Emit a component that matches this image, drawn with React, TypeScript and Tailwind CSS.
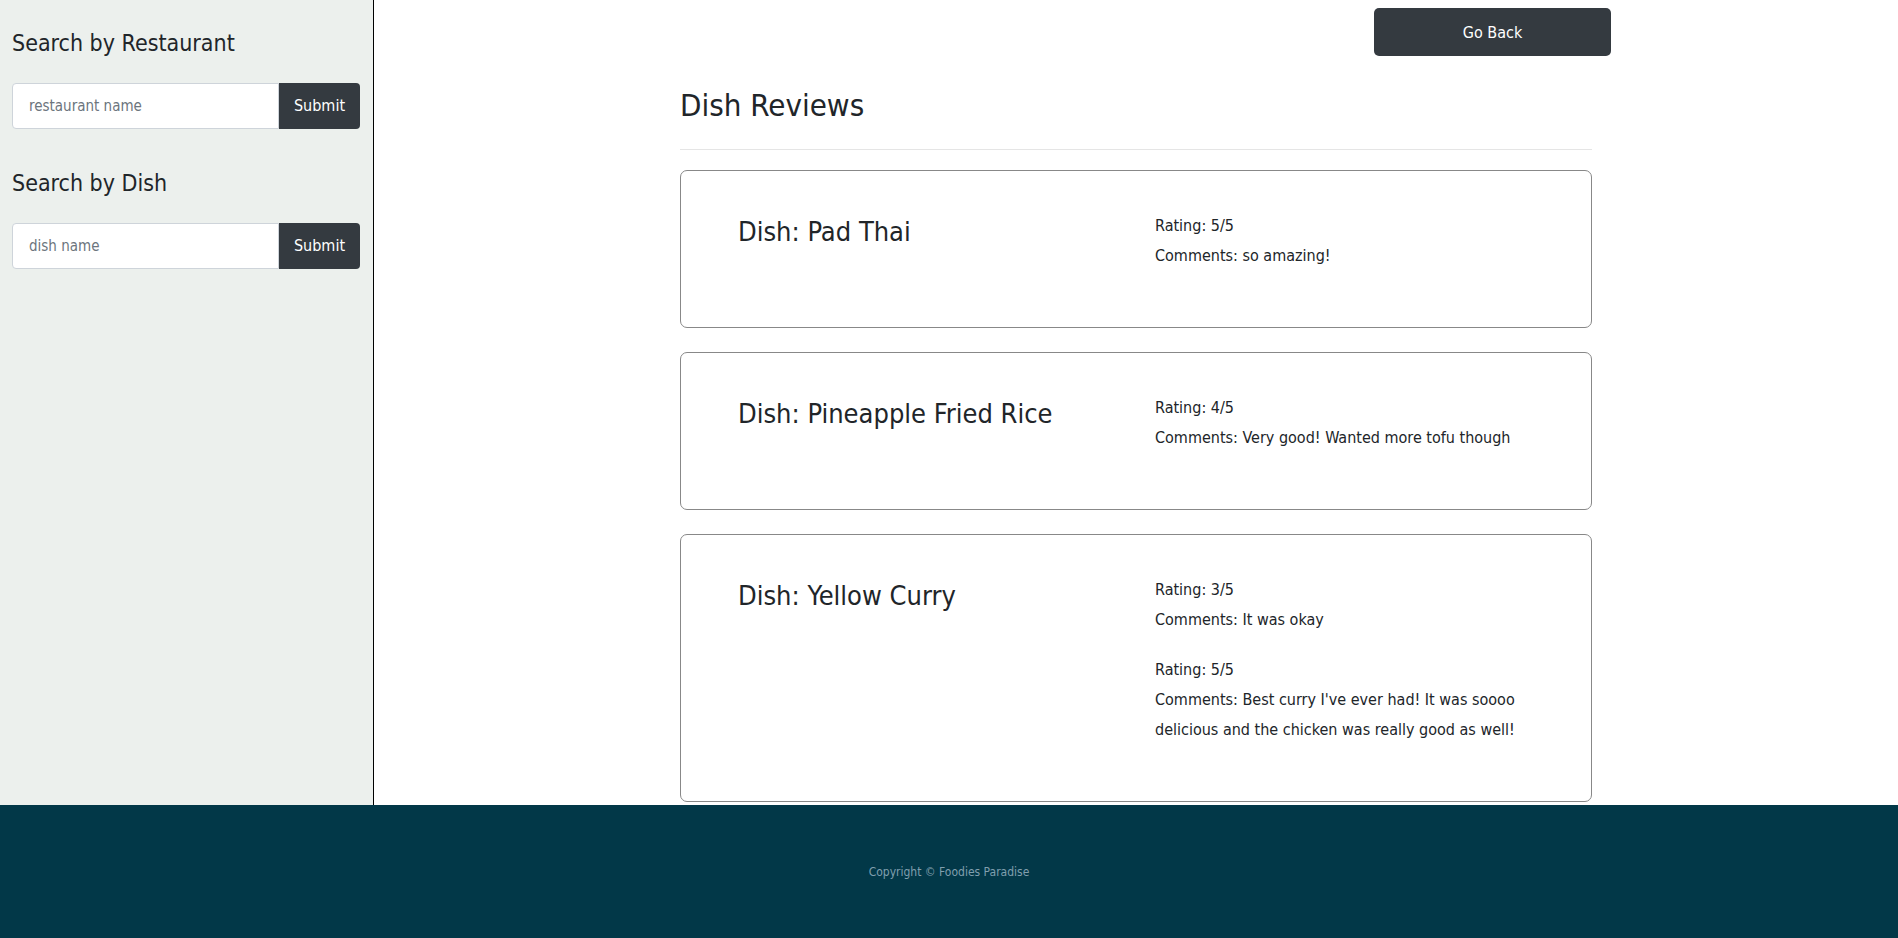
import React from "react";

const font = { fontFamily: '"Liberation Sans Narrow", "DejaVu Sans Condensed", "Liberation Sans", sans-serif' };

const reviewsData = [
  {
    id: 1,
    dish: "Pad Thai",
    reviews: [{ rating: 5, comments: "so amazing!" }],
  },
  {
    id: 2,
    dish: "Pineapple Fried Rice",
    reviews: [{ rating: 4, comments: "Very good! Wanted more tofu though" }],
  },
  {
    id: 3,
    dish: "Yellow Curry",
    reviews: [
      { rating: 3, comments: "It was okay" },
      {
        rating: 5,
        comments: "Best curry I've ever had! It was soooo delicious and the chicken was really good as well!",
      },
    ],
  },
];

const SearchBox = ({ title, placeholder }: { title: string; placeholder: string }) => {
  return (
    <div>
      <h3 className="text-[23px] leading-[34px] text-[#212529] mb-[23px]">{title}</h3>
      <div className="flex w-[348px]">
        <input
          className="w-[267px] h-[46px] border border-[#ced4da] rounded-l-[4px] bg-white pl-[16px] text-[15px] text-[#495057] placeholder:text-[#6c757d] outline-none"
          placeholder={placeholder}
          style={font}
        />
        <button
          className="w-[81px] h-[46px] bg-[#343a40] text-white text-[16px] rounded-r-[4px]"
          style={font}
        >
          Submit
        </button>
      </div>
    </div>
  );
};

const DishCard = ({ dish, reviews }: { dish: string; reviews: { rating: number; comments: string }[] }) => {
  return (
    <div className="border border-[#888888] rounded-[7px] pt-[38px] pb-[36px] pl-[57px] flex">
      <div className="w-[417px] shrink-0">
        <h2 className="text-[27px] leading-[37px] mt-[4px] text-[#212529]">Dish: {dish}</h2>
      </div>
      <div className="w-[385px] pt-[2px]">
        {reviews.map((r, i) => (
          <div key={i} className="mb-[20px] text-[16px] leading-[30px] text-[#212529]">
            <p>Rating: {r.rating}/5</p>
            <p>Comments: {r.comments}</p>
          </div>
        ))}
      </div>
    </div>
  );
};

const App = () => {
  return (
    <div className="min-h-screen flex flex-col bg-white" style={font}>
      <div className="flex flex-1">
        <aside className="w-[374px] shrink-0 bg-[#ecf0ed] border-r border-black pl-[12px] pt-[26px]">
          <SearchBox title="Search by Restaurant" placeholder="restaurant name" />
          <div className="h-[37px]" />
          <SearchBox title="Search by Dish" placeholder="dish name" />
        </aside>
        <main className="flex-1 pb-[3px]">
          <div className="w-[912px] mx-auto">
            <div className="flex justify-end mr-[-19px] pt-[8px]">
              <button className="w-[237px] h-[48px] pt-[2px] bg-[#343a40] text-white text-[16px] rounded-[5px]" style={font}>
                Go Back
              </button>
            </div>
            <h1 className="mt-[28px] text-[31px] leading-[43px] text-[#212529]">Dish Reviews</h1>
            <hr className="mt-[22px] border-t border-[#e5e5e5]" />
            <div className="mt-[20px] flex flex-col gap-[24px]">
              {reviewsData.map((d) => (
                <DishCard key={d.id} dish={d.dish} reviews={d.reviews} />
              ))}
            </div>
          </div>
        </main>
      </div>
      <footer className="h-[133px] bg-[#023848] flex items-center justify-center">
        <span className="text-[12px] text-[#809fae]">Copyright © Foodies Paradise</span>
      </footer>
    </div>
  );
};

export default App;
